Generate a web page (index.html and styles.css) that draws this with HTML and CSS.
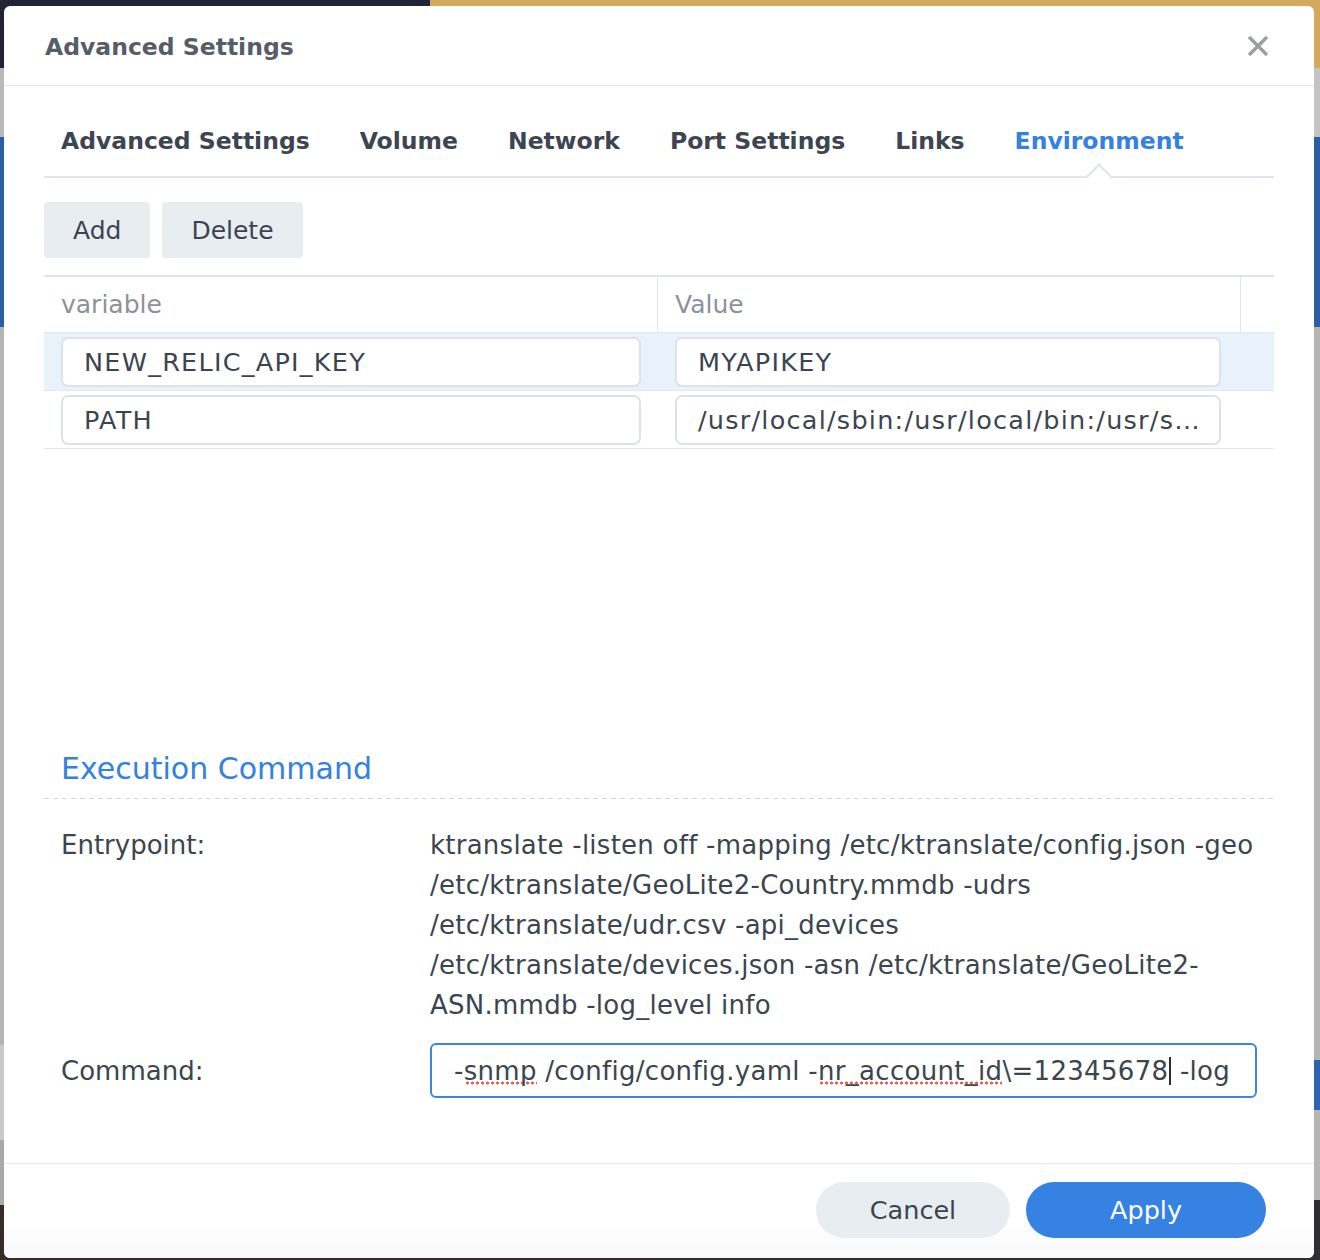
FILE: index.html
```html
<!DOCTYPE html>
<html lang="en">
<head>
<meta charset="utf-8">
<title>Advanced Settings</title>
<link rel="stylesheet" href="styles.css">
</head>
<body>
<div class="desk">
  <div class="dialog">
    <header class="dlg-head">
      <h1 class="dlg-title">Advanced Settings</h1>
      <button class="close" aria-label="Close">
        <svg width="22" height="22" viewBox="0 0 22 22"><path d="M2 2 L20 20 M20 2 L2 20" stroke="#9b9ea3" stroke-width="3.4" stroke-linecap="butt" fill="none"/></svg>
      </button>
    </header>
    <div class="dlg-body">
      <nav class="tabs">
        <span class="tab">Advanced Settings</span>
        <span class="tab">Volume</span>
        <span class="tab">Network</span>
        <span class="tab">Port Settings</span>
        <span class="tab">Links</span>
        <span class="tab active">Environment</span>
      </nav>
      <div class="toolbar">
        <button class="btn">Add</button>
        <button class="btn">Delete</button>
      </div>
      <div class="grid">
        <div class="grid-head">
          <div class="gh c1">variable</div>
          <div class="gh c2">Value</div>
          <div class="gh c3"></div>
        </div>
        <div class="grid-row selected">
          <div class="cell c1"><div class="field">NEW_RELIC_API_KEY</div></div>
          <div class="cell c2"><div class="field">MYAPIKEY</div></div>
          <div class="cell c3"></div>
        </div>
        <div class="grid-row">
          <div class="cell c1"><div class="field">PATH</div></div>
          <div class="cell c2"><div class="field">/usr/local/sbin:/usr/local/bin:/usr/s…</div></div>
          <div class="cell c3"></div>
        </div>
      </div>
      <div class="spacer"></div>
      <section class="exec">
        <h2 class="exec-title">Execution Command</h2>
        <div class="form-row first">
          <div class="label">Entrypoint:</div>
          <div class="value">ktranslate -listen off -mapping /etc/ktranslate/config.json -geo<br>/etc/ktranslate/GeoLite2-Country.mmdb -udrs<br>/etc/ktranslate/udr.csv -api_devices<br>/etc/ktranslate/devices.json -asn /etc/ktranslate/GeoLite2-<br>ASN.mmdb -log_level info</div>
        </div>
        <div class="form-row cmd-row">
          <div class="label">Command:</div>
          <div class="cmd-input"><div class="cmd-text">-<span class="spell">snmp</span> /config/config.yaml -<span class="spell">nr_account_id</span>\=12345678<span class="caret"></span> -log</div></div>
        </div>
      </section>
    </div>
    <footer class="dlg-foot">
      <button class="pill cancel">Cancel</button>
      <button class="pill apply">Apply</button>
    </footer>
  </div>
</div>
</body>
</html>
```

FILE: styles.css
```css
* { box-sizing: border-box; }

html, body {
  margin: 0;
  padding: 0;
}

body {
  width: 1320px;
  height: 1260px;
  overflow: hidden;
  font-family: "DejaVu Sans", Verdana, sans-serif;
  color: #3b4550;
}

.desk {
  width: 1320px;
  height: 1260px;
  padding: 6px 6px 2px 4px;
  background:
    linear-gradient(to right, #1f2535 0, #1f2535 430px, #d4a95c 430px) left top / 100% 6px no-repeat,
    linear-gradient(to bottom, #1f2535 0, #1f2535 68px, #b9b9b9 68px, #b9b9b9 137px, #2b5ea6 137px, #2b5ea6 327px, #b5b5b5 327px, #b5b5b5 1045px, #c9c9c9 1045px, #c9c9c9 1140px, #a9a9a9 1140px, #a9a9a9 1205px, #3b2b26 1205px) left top / 50% 100% no-repeat,
    linear-gradient(to bottom, #d4a95c 0, #d4a95c 68px, #c4c4c4 68px, #c4c4c4 137px, #2b5ea6 137px, #2b5ea6 327px, #b5b5b5 327px, #b5b5b5 1060px, #2d63b0 1060px, #2d63b0 1110px, #b5b5b5 1110px, #b5b5b5 1200px, #2f2f33 1200px) right top / 50% 100% no-repeat;
}

.dialog {
  width: 1310px;
  height: 1252px;
  background: #ffffff;
  border-radius: 6px;
  display: flex;
  flex-direction: column;
  overflow: hidden;
}

/* header */
.dlg-head {
  height: 80px;
  flex: none;
  display: flex;
  align-items: center;
  justify-content: space-between;
  padding: 2px 45px 0 41px;
  border-bottom: 1px solid #e4e7ee;
}

.dlg-title {
  margin: 0;
  font-size: 23.5px;
  font-weight: bold;
  color: #555d67;
  line-height: 30px;
}

.close {
  border: 0;
  background: transparent;
  padding: 0;
  width: 22px;
  height: 22px;
  display: flex;
  margin-top: -2px;
}

/* body */
.dlg-body {
  flex: 1;
  display: flex;
  flex-direction: column;
  padding: 0 40px 65px 40px;
}

.tabs {
  display: flex;
  gap: 50px;
  padding: 0 0 0 17px;
  border-bottom: 2px solid #dfe3ea;
}

.tab {
  position: relative;
  padding: 40px 0 20px 0;
  font-size: 23.5px;
  line-height: 30px;
  font-weight: bold;
  color: #3c4551;
  white-space: nowrap;
}

.tab.active {
  color: #3481e0;
}

.tab.active::after {
  content: "";
  position: absolute;
  left: 50%;
  bottom: -9px;
  width: 16px;
  height: 16px;
  background: #ffffff;
  border-top: 2px solid #dfe3ea;
  border-left: 2px solid #dfe3ea;
  transform: translateX(-50%) rotate(45deg);
}

.toolbar {
  display: flex;
  gap: 12px;
  margin-top: 24px;
}

.btn {
  height: 56px;
  padding: 0 29px;
  border: 0;
  border-radius: 4px;
  background: #e8edf2;
  font-family: inherit;
  font-size: 25px;
  color: #3b4550;
}

/* grid */
.grid {
  margin-top: 17px;
  border-top: 2px solid #dfe3ea;
}

.grid-head,
.grid-row {
  display: flex;
  border-bottom: 1px solid #e3e7ed;
}

.grid-head {
  height: 56px;
}

.grid-row {
  height: 58px;
}

.grid-row.selected {
  background: #e9f1fb;
}

.c1 { width: 614px; flex: none; }
.c2 { width: 583px; flex: none; }
.c3 { flex: 1; }

.gh {
  display: flex;
  align-items: center;
  padding-left: 17px;
  font-size: 25px;
  color: #8b9299;
}

.gh.c1, .gh.c2 {
  border-right: 1px solid #e3e7ed;
}

.cell {
  display: flex;
  align-items: center;
  padding: 0 17px;
}

.cell.c2 {
  padding-right: 20px;
}

.field {
  width: 100%;
  height: 50px;
  border: 2px solid #dde2e9;
  border-radius: 7px;
  background: #ffffff;
  padding: 0 20px 0 21px;
  display: flex;
  align-items: center;
  font-size: 25.5px;
  letter-spacing: 1.25px;
  color: #3b4550;
  white-space: nowrap;
  overflow: hidden;
}

.spacer {
  flex: 1;
}

/* execution */
.exec-title {
  margin: 0;
  padding: 0 0 12px 17px;
  font-size: 30px;
  line-height: 36px;
  font-weight: normal;
  color: #3481e0;
  background: repeating-linear-gradient(to right, #d3d8df 0, #d3d8df 5px, transparent 5px, transparent 9px) left bottom / 100% 1px no-repeat;
}

.form-row {
  display: flex;
  padding: 0 17px;
}

.form-row.first {
  margin-top: 26px;
}

.label {
  width: 369px;
  flex: none;
  font-size: 26px;
  line-height: 40px;
  color: #3b4550;
}

.value {
  flex: 1;
  min-width: 0;
  font-size: 26px;
  line-height: 40px;
  letter-spacing: 0.25px;
  color: #3b4550;
}

.cmd-row {
  margin-top: 18px;
  align-items: center;
}

.cmd-input {
  flex: 1;
  min-width: 0;
  height: 55px;
  border: 2px solid #3a86e0;
  border-radius: 6px;
  padding: 0 23px 0 22px;
  display: flex;
  align-items: center;
}

.cmd-text {
  flex: 1;
  min-width: 0;
  overflow: hidden;
  white-space: nowrap;
  font-size: 26px;
  line-height: 40px;
  letter-spacing: 0.3px;
  color: #3b4550;
}

.spell {
  background-image: radial-gradient(circle, #ec5f52 0, #ec5f52 1.3px, transparent 1.8px);
  background-size: 5px 4px;
  background-repeat: repeat-x;
  background-position: 1px calc(100% - 1px);
}

.caret {
  display: inline-block;
  width: 2px;
  height: 28px;
  background: #2b2f35;
  vertical-align: -5px;
  margin-left: 1px;
}

/* footer */
.dlg-foot {
  flex: none;
  height: 95px;
  border-top: 1px solid #e3e7ed;
  display: flex;
  justify-content: flex-end;
  align-items: flex-start;
  gap: 16px;
  padding: 18px 48px 0 0;
  background: linear-gradient(to bottom, #ffffff 0, #ffffff 60%, #f8f8f8 100%);
}

.pill {
  height: 56px;
  border: 0;
  border-radius: 28px;
  font-family: inherit;
  font-size: 25.5px;
}

.cancel {
  width: 194px;
  background: #e8edf2;
  color: #3b4550;
}

.apply {
  width: 240px;
  background: #3582e2;
  color: #ffffff;
}
```
